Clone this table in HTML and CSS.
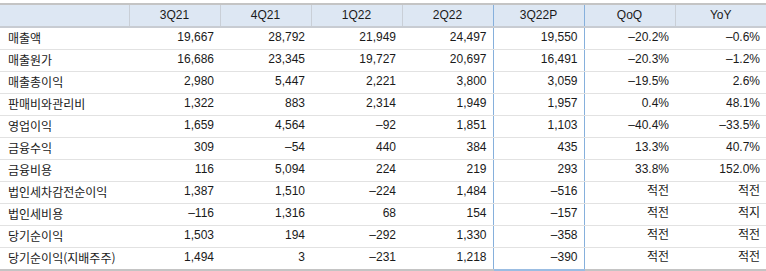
FILE: index.html
```html
<!DOCTYPE html>
<html lang="ko">
<head>
<meta charset="utf-8">
<link rel="stylesheet" href="styles.css">
</head>
<body>
<table class="fin">
  <colgroup>
    <col class="c-label"><col class="c-num"><col class="c-num"><col class="c-num"><col class="c-num"><col class="c-num"><col class="c-num"><col class="c-num">
  </colgroup>
  <thead>
    <tr><th></th><th>3Q21</th><th>4Q21</th><th>1Q22</th><th>2Q22</th><th class="hl">3Q22P</th><th>QoQ</th><th>YoY</th></tr>
  </thead>
  <tbody>
    <tr><td>매출액</td><td>19,667</td><td>28,792</td><td>21,949</td><td>24,497</td><td class="hl">19,550</td><td>–20.2%</td><td>–0.6%</td></tr>
    <tr><td>매출원가</td><td>16,686</td><td>23,345</td><td>19,727</td><td>20,697</td><td class="hl">16,491</td><td>–20.3%</td><td>–1.2%</td></tr>
    <tr><td>매출총이익</td><td>2,980</td><td>5,447</td><td>2,221</td><td>3,800</td><td class="hl">3,059</td><td>–19.5%</td><td>2.6%</td></tr>
    <tr><td>판매비와관리비</td><td>1,322</td><td>883</td><td>2,314</td><td>1,949</td><td class="hl">1,957</td><td>0.4%</td><td>48.1%</td></tr>
    <tr><td>영업이익</td><td>1,659</td><td>4,564</td><td>–92</td><td>1,851</td><td class="hl">1,103</td><td>–40.4%</td><td>–33.5%</td></tr>
    <tr><td>금융수익</td><td>309</td><td>–54</td><td>440</td><td>384</td><td class="hl">435</td><td>13.3%</td><td>40.7%</td></tr>
    <tr><td>금융비용</td><td>116</td><td>5,094</td><td>224</td><td>219</td><td class="hl">293</td><td>33.8%</td><td>152.0%</td></tr>
    <tr><td>법인세차감전순이익</td><td>1,387</td><td>1,510</td><td>–224</td><td>1,484</td><td class="hl">–516</td><td>적전</td><td>적전</td></tr>
    <tr><td>법인세비용</td><td>–116</td><td>1,316</td><td>68</td><td>154</td><td class="hl">–157</td><td>적전</td><td>적지</td></tr>
    <tr><td>당기순이익</td><td>1,503</td><td>194</td><td>–292</td><td>1,330</td><td class="hl">–358</td><td>적전</td><td>적전</td></tr>
    <tr class="last"><td>당기순이익(지배주주)</td><td>1,494</td><td>3</td><td>–231</td><td>1,218</td><td class="hl">–390</td><td>적전</td><td>적전</td></tr>
  </tbody>
</table>
</body>
</html>
```
FILE: styles.css
```css
html, body {
  margin: 0;
  padding: 0;
  background: #ffffff;
}
body {
  padding-top: 3px;
  font-family: "Liberation Sans", "Noto Sans CJK KR", sans-serif;
  font-size: 12px;
  color: #1a1a1a;
}
.fin {
  border-collapse: collapse;
  table-layout: fixed;
  width: 766px;
}
.c-label { width: 129px; }
.c-num { width: 91px; }
.fin thead tr {
  border-top: 2px solid #c4c4c4;
  border-bottom: 2px solid #c8ccd2;
}
.fin th {
  background: #dde7f3;
  height: 20px;
  padding: 0 5px 1px 5px;
  font-weight: normal;
  text-align: center;
  border-left: 1px solid #c9cfd7;
  line-height: 18px;
  overflow: hidden;
}
.fin th:first-child { border-left: none; }
.fin td {
  box-sizing: border-box;
  height: 22px;
  padding: 0 6px 2px 5px;
  text-align: right;
  border-bottom: 1px solid #e2e2e2;
  line-height: 19px;
  white-space: nowrap;
  overflow: hidden;
}
.fin td:first-child {
  text-align: left;
  padding-left: 8px;
  font-family: "Noto Sans CJK KR", sans-serif;
}
.fin tr.last td { border-bottom: 2px solid #c4c4c4; }
.fin .hl {
  border-left: 1px solid #86b0dc;
  border-right: 1px solid #86b0dc;
}
.fin th.hl { border-top: 2px solid #c4c4c4; }
.fin tr.last td.hl { border-bottom: 2px solid #9bbde2; }
```
